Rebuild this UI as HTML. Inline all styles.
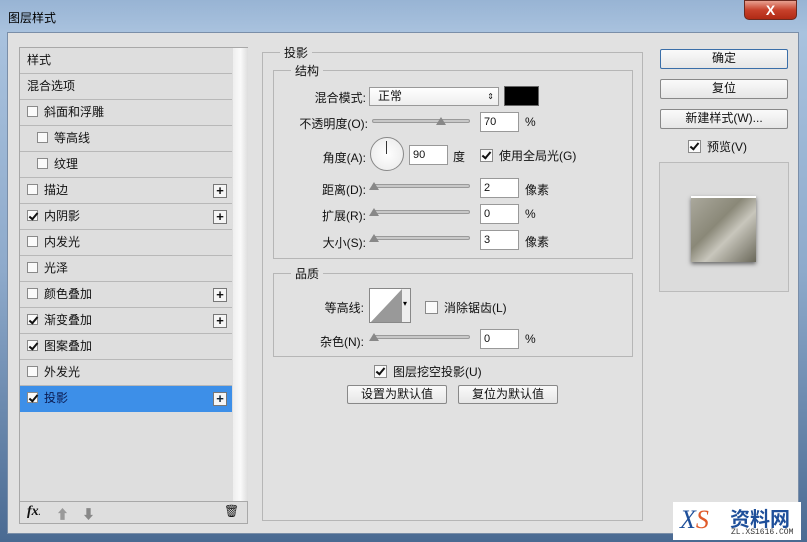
<!DOCTYPE html>
<html><head><meta charset="utf-8"><style>
*{margin:0;padding:0;box-sizing:border-box}
body{width:807px;height:542px;overflow:hidden;position:relative;font-family:"Liberation Sans","Noto Sans CJK SC",sans-serif;font-size:12px;color:#111;background:linear-gradient(180deg,#98b4d4 0%,#a9c2de 6%,#8eaacb 50%,#4a6a92 100%)}
.a{position:absolute}
.title{left:8px;top:9px;font-size:12px;color:#000}
.close{left:744px;top:0;width:53px;height:20px;border-radius:0 0 5px 5px;background:linear-gradient(#e8a090,#c7412b 50%,#b02a15);border:1px solid #6b2a20;color:#fff;font-weight:bold;text-align:center;font-size:14px;line-height:18px}
.body{left:7px;top:32px;width:792px;height:502px;background:#e1e1e1;border:1px solid #7a8ea8}
.list{left:19px;top:47px;width:229px;height:477px;border:1px solid #a8a8a8;background:#dedede}
.row{position:absolute;left:0;width:212px;height:26px;border-bottom:1px solid #b8b8b8;line-height:25px;padding-left:7px;font-size:12px}
.cb{display:inline-block;width:11px;height:11px;border:1px solid #8a8a8a;background:#fafafa;vertical-align:middle;margin:-2px 6px 0 0;position:relative;overflow:visible}
.cb.k::after{content:"";position:absolute;left:3px;top:0px;width:3px;height:7px;border:solid #111;border-width:0 2px 2px 0;transform:rotate(40deg)}
.plus{position:absolute;right:5px;top:6px;width:14px;height:14px;border:1px solid #777;background:#f5f5f5;text-align:center;line-height:11px;font-weight:bold;font-size:13px}
.scroll{left:213px;top:0;width:15px;height:453px;background:linear-gradient(90deg,#eee,#fafafa,#ddd)}
.grp{border:1px solid #b6b6b6}
.lbl{position:absolute;background:#e1e1e1;padding:0 4px}
.in{position:absolute;width:39px;height:20px;border:1px solid #999;background:#fff;padding-left:3px;line-height:18px;font-size:11px}
.sl{position:absolute;height:4px;border:1px solid #9a9a9a;border-radius:2px;background:#c8c8c8;width:98px}
.th{position:absolute;width:0;height:0;border-left:5px solid transparent;border-right:5px solid transparent;border-bottom:8px solid #888}
.btn{position:absolute;border:1px solid #888;background:linear-gradient(#fafafa,#e6e6e6);text-align:center;line-height:17px;font-size:12px;border-radius:2px}
.r{position:absolute;text-align:right;font-size:12px}
</style></head><body>
<div class="a title">图层样式</div>
<div class="a close">X</div>
<div class="a body"></div>

<div class="a list">
 <div class="row" style="top:0">样式</div>
 <div class="row" style="top:26px">混合选项</div>
 <div class="row" style="top:52px"><span class="cb"></span>斜面和浮雕</div>
 <div class="row" style="top:78px;padding-left:17px"><span class="cb"></span>等高线</div>
 <div class="row" style="top:104px;padding-left:17px"><span class="cb"></span>纹理</div>
 <div class="row" style="top:130px"><span class="cb"></span>描边<span class="plus">+</span></div>
 <div class="row" style="top:156px"><span class="cb k"></span>内阴影<span class="plus">+</span></div>
 <div class="row" style="top:182px"><span class="cb"></span>内发光</div>
 <div class="row" style="top:208px"><span class="cb"></span>光泽</div>
 <div class="row" style="top:234px"><span class="cb"></span>颜色叠加<span class="plus">+</span></div>
 <div class="row" style="top:260px"><span class="cb k"></span>渐变叠加<span class="plus">+</span></div>
 <div class="row" style="top:286px"><span class="cb k"></span>图案叠加</div>
 <div class="row" style="top:312px"><span class="cb"></span>外发光</div>
 <div class="row" style="top:338px;background:#3d8fe8;color:#0a1a50;border-bottom:none"><span class="cb k"></span>投影<span class="plus" style="color:#123">+</span></div>
 <div class="a scroll"></div>
 <div class="a" style="left:0;top:453px;width:227px;height:1px;background:#a8a8a8"></div>
 <div class="a" style="left:7px;top:456px;font-style:italic;font-weight:bold;font-family:'Liberation Serif',serif;font-size:14px">fx<span style="font-size:8px">.</span></div>
 <div class="a" style="left:36px;top:456px;color:#999;font-size:13px">⬆</div>
 <div class="a" style="left:62px;top:456px;color:#888;font-size:13px">⬇</div>
 <div class="a" style="left:204px;top:456px;font-size:12px">🗑</div>
</div>

<div class="a grp" style="left:262px;top:52px;width:381px;height:469px"></div>
<div class="lbl" style="left:280px;top:44px">投影</div>
<div class="a grp" style="left:273px;top:70px;width:360px;height:189px"></div>
<div class="lbl" style="left:291px;top:62px">结构</div>

<div class="r" style="left:290px;top:89px;width:76px">混合模式:</div>
<div class="a" style="left:369px;top:87px;width:130px;height:19px;border:1px solid #999;background:linear-gradient(#fff,#eee);padding-left:8px;line-height:17px">正常<span style="position:absolute;right:4px;font-size:8px">⇕</span></div>
<div class="a" style="left:504px;top:86px;width:35px;height:20px;background:#000;border:1px solid #666"></div>

<div class="r" style="left:280px;top:115px;width:88px">不透明度(O):</div>
<div class="sl" style="left:372px;top:119px"></div><div class="th" style="left:436px;top:117px"></div>
<div class="in" style="left:480px;top:112px">70</div><div class="a" style="left:525px;top:115px">%</div>

<div class="r" style="left:290px;top:149px;width:76px">角度(A):</div>
<div class="a" style="left:370px;top:137px;width:34px;height:34px;border-radius:50%;border:1px solid #888;background:radial-gradient(#fff,#e8e8e8)"></div>
<div class="a" style="left:386px;top:141px;width:1px;height:13px;background:#333"></div>
<div class="in" style="left:409px;top:145px">90</div>
<div class="a" style="left:453px;top:148px">度</div>
<div class="a" style="left:480px;top:147px"><span class="cb k" style="width:13px;height:13px"></span>使用全局光(G)</div>

<div class="r" style="left:290px;top:181px;width:76px">距离(D):</div>
<div class="sl" style="left:372px;top:184px"></div><div class="th" style="left:369px;top:182px"></div>
<div class="in" style="left:480px;top:178px">2</div><div class="a" style="left:525px;top:181px">像素</div>

<div class="r" style="left:290px;top:207px;width:76px">扩展(R):</div>
<div class="sl" style="left:372px;top:210px"></div><div class="th" style="left:369px;top:208px"></div>
<div class="in" style="left:480px;top:204px">0</div><div class="a" style="left:525px;top:207px">%</div>

<div class="r" style="left:290px;top:234px;width:76px">大小(S):</div>
<div class="sl" style="left:372px;top:236px"></div><div class="th" style="left:369px;top:234px"></div>
<div class="in" style="left:480px;top:230px">3</div><div class="a" style="left:525px;top:233px">像素</div>

<div class="a grp" style="left:273px;top:273px;width:360px;height:84px"></div>
<div class="lbl" style="left:291px;top:265px">品质</div>
<div class="r" style="left:290px;top:299px;width:74px">等高线:</div>
<div class="a" style="left:369px;top:288px;width:42px;height:35px;border:1px solid #888;background:#fff;overflow:hidden">
 <svg width="42" height="35"><polygon points="0,34 32,0 32,34" fill="#999"/><rect x="32" y="0" width="10" height="35" fill="#eee"/><text x="33" y="17" font-size="8">▾</text></svg></div>
<div class="a" style="left:425px;top:299px"><span class="cb" style="width:13px;height:13px"></span>消除锯齿(L)</div>
<div class="r" style="left:290px;top:333px;width:74px">杂色(N):</div>
<div class="sl" style="left:372px;top:335px"></div><div class="th" style="left:369px;top:333px"></div>
<div class="in" style="left:480px;top:329px">0</div><div class="a" style="left:525px;top:332px">%</div>

<div class="a" style="left:374px;top:363px"><span class="cb k" style="width:13px;height:13px"></span>图层挖空投影(U)</div>
<div class="btn" style="left:347px;top:385px;width:100px;height:19px">设置为默认值</div>
<div class="btn" style="left:458px;top:385px;width:100px;height:19px">复位为默认值</div>

<div class="btn" style="left:660px;top:49px;width:128px;height:20px;border-color:#3a6ea8">确定</div>
<div class="btn" style="left:660px;top:79px;width:128px;height:20px">复位</div>
<div class="btn" style="left:660px;top:109px;width:128px;height:20px">新建样式(W)...</div>
<div class="a" style="left:688px;top:138px"><span class="cb k" style="width:13px;height:13px"></span>预览(V)</div>
<div class="a" style="left:659px;top:162px;width:130px;height:130px;border:1px solid #bbb;background:#dcdcdc"></div>
<div class="a" style="left:691px;top:196px;width:65px;height:66px;background:linear-gradient(135deg,#aaa89c,#8a8878 40%,#c8c6bc 60%,#6a685a);box-shadow:0 2px 4px #666;border-top:2px solid #fff"></div>

<div class="a" style="left:673px;top:502px;width:128px;height:38px;background:#fff"></div>
<div class="a" style="left:680px;top:505px;font-family:'Liberation Serif',serif;font-style:italic;font-size:26px;color:#1e4f9a">X<span style="color:#e05a2a">S</span></div>
<div class="a" style="left:730px;top:503px;font-size:20px;font-weight:bold;color:#1e4f9a">资料网</div>
<div class="a" style="left:731px;top:528px;font-size:8px;font-family:'Liberation Mono',monospace;color:#333">ZL.XS1616.COM</div>
</body></html>
